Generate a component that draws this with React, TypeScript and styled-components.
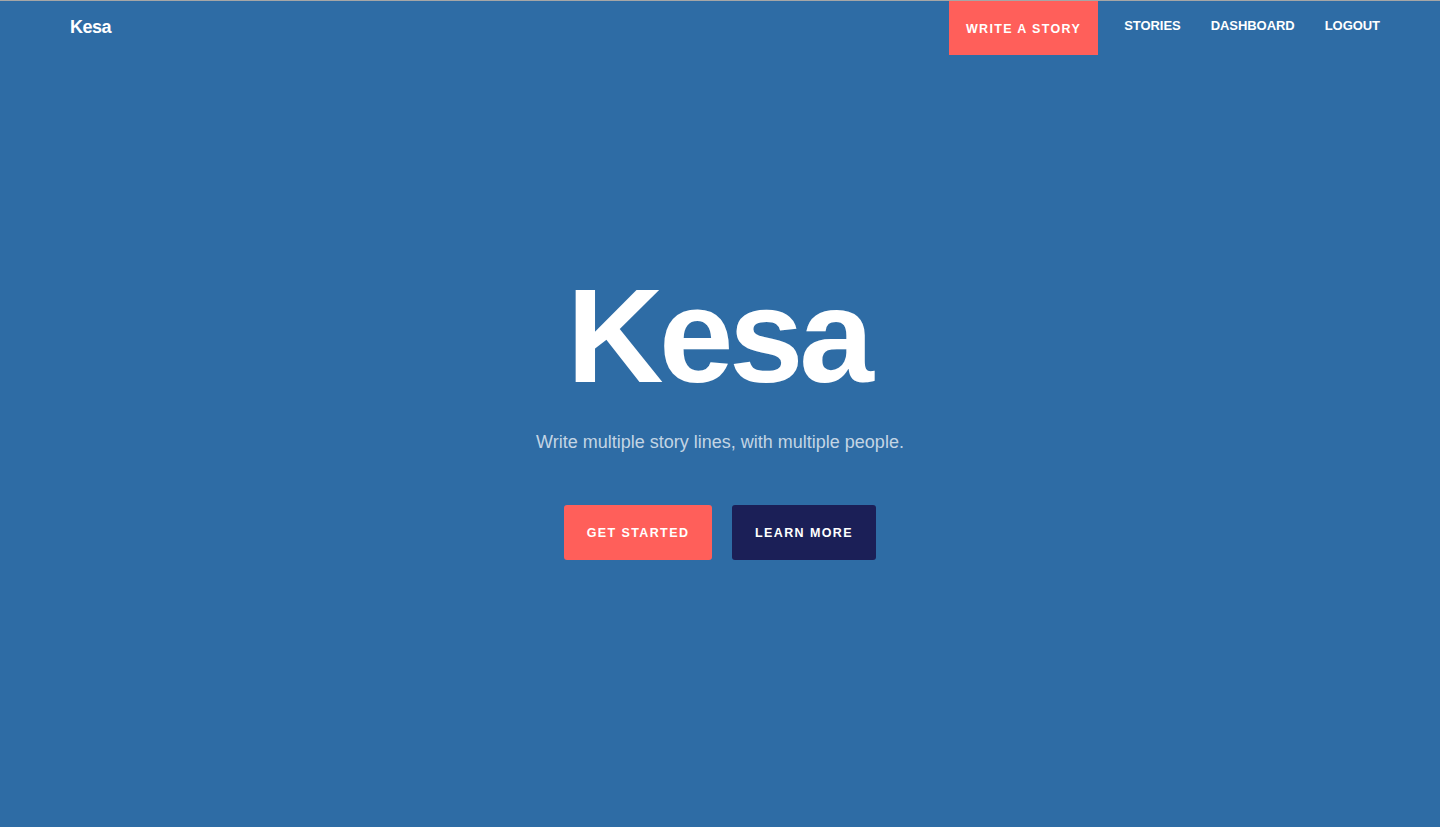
import React from "react";
import styled, { createGlobalStyle } from "styled-components";

const Global = createGlobalStyle`
  html, body { margin: 0; padding: 0; }
  body {
    background: #2e6ca5;
    font-family: "Liberation Sans", Arial, Helvetica, sans-serif;
    -webkit-font-smoothing: antialiased;
  }
  * { box-sizing: border-box; }
`;

const Page = styled.div`
  min-height: 827px;
  display: flex;
  flex-direction: column;
  background: #2e6ca5;
  border-top: 1px solid #a6a6a6;
`;

const NavBar = styled.header`
  display: flex;
  align-items: flex-start;
  justify-content: space-between;
  padding: 0 45px 0 70px;
  height: 54px;
`;

const Logo = styled.a`
  color: #fff;
  font-weight: 700;
  font-size: 18px;
  letter-spacing: -0.5px;
  text-decoration: none;
  margin-top: 16px;
`;

const NavLinks = styled.nav`
  display: flex;
  align-items: flex-start;
`;

const NavLink = styled.a<{ $primary?: boolean }>`
  display: flex;
  align-items: center;
  color: #fff;
  text-decoration: none;
  font-weight: 700;
  font-size: ${(p) => (p.$primary ? "12.5px" : "13px")};
  text-transform: uppercase;
  height: ${(p) => (p.$primary ? "54px" : "48px")};
  padding: ${(p) => (p.$primary ? "2px 17px 0" : "0 15px")};
  letter-spacing: ${(p) => (p.$primary ? "1.35px" : "-0.05px")};
  background: ${(p) => (p.$primary ? "#ff5f5a" : "transparent")};
  margin-right: ${(p) => (p.$primary ? "11px" : "0")};
`;

const Hero = styled.main`
  flex: 1;
  display: flex;
  flex-direction: column;
  align-items: center;
  padding-top: 214px;
`;

const Title = styled.h1`
  margin: 0;
  color: #fff;
  font-weight: 700;
  font-size: 134px;
  line-height: 1;
  letter-spacing: -4.5px;
  padding-right: 4px;
`;

const Subtitle = styled.p`
  margin: 29px 0 0;
  color: rgba(255, 255, 255, 0.72);
  font-size: 18px;
  font-weight: 300;
  letter-spacing: 0;
`;

const Actions = styled.div`
  display: flex;
  gap: 20px;
  margin-top: 52px;
`;

const Button = styled.a<{ $variant: "coral" | "navy" }>`
  display: flex;
  align-items: center;
  justify-content: center;
  height: 55px;
  width: ${(p) => (p.$variant === "coral" ? "148px" : "144px")};
  border-radius: 3px;
  background: ${(p) => (p.$variant === "coral" ? "#ff5f5a" : "#1b1f57")};
  color: #fff;
  font-weight: 700;
  font-size: 12.5px;
  letter-spacing: 1.4px;
  text-transform: uppercase;
  text-decoration: none;
`;

export default function App() {
  return (
    <>
      <Global />
      <Page>
        <NavBar>
          <Logo href="#">Kesa</Logo>
          <NavLinks>
            <NavLink $primary href="#">Write a story</NavLink>
            <NavLink href="#">Stories</NavLink>
            <NavLink href="#">Dashboard</NavLink>
            <NavLink href="#">Logout</NavLink>
          </NavLinks>
        </NavBar>
        <Hero>
          <Title>Kesa</Title>
          <Subtitle>Write multiple story lines, with multiple people.</Subtitle>
          <Actions>
            <Button $variant="coral" href="#">Get started</Button>
            <Button $variant="navy" href="#">Learn more</Button>
          </Actions>
        </Hero>
      </Page>
    </>
  );
}
